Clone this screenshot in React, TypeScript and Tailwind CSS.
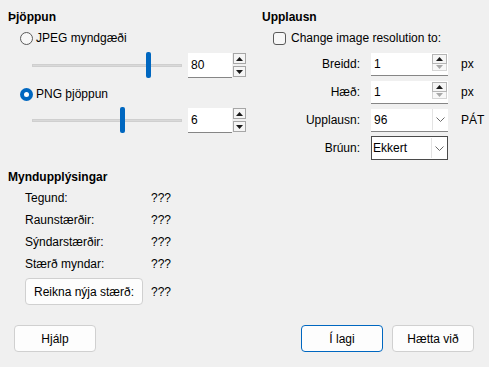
import React from 'react';

const Radio = ({ checked, label }: { checked?: boolean; label: string }) => (
    <div className="flex items-center h-[14px] pl-[12px]">
        {checked ? (
            <div className="w-[13px] h-[13px] rounded-full bg-[#0067c0] flex items-center justify-center">
                <div className="w-[5px] h-[5px] rounded-full bg-white"></div>
            </div>
        ) : (
            <div className="w-[13px] h-[13px] rounded-full border border-[#5a5a5a] bg-[#f7f7f7]"></div>
        )}
        <span className="ml-[3px]">{label}</span>
    </div>
);

const Arrow = ({ up, dim }: { up?: boolean; dim?: boolean }) => (
    <svg width="7" height="4" viewBox="0 0 7 4">
        <path d={up ? 'M0 4 L3.5 0 L7 4 Z' : 'M0 0 L3.5 4 L7 0 Z'} fill={dim ? '#a8a8a8' : '#1a1a1a'} />
    </svg>
);

const SliderRow = ({ pos, value }: { pos: number; value: string }) => (
    <div className="flex items-center h-[26px] pl-[24px]">
        <div className="relative w-[150px] h-[26px] flex items-center">
            <div className="w-full h-[3px] bg-[#d9d9d9] border border-[#cfcfcf]"></div>
            <div className="absolute top-0 w-[5px] h-[26px] bg-[#0067c0] rounded-[2px]" style={{ left: pos }}></div>
        </div>
        <div className="ml-[6px] w-[44px] h-[25px] bg-white border-b border-[#868686] flex items-center pl-[3px]">{value}</div>
        <div className="ml-[1px] flex flex-col gap-[2px]">
            <div className="w-[13px] h-[11px] border border-[#a6a6a6] bg-[#f5f5f5] flex items-center justify-center"><Arrow up /></div>
            <div className="w-[13px] h-[11px] border border-[#a6a6a6] bg-[#f5f5f5] flex items-center justify-center"><Arrow /></div>
        </div>
    </div>
);

const FormRow = ({ label, unit, children }: { label: string; unit?: string; children: React.ReactNode }) => (
    <div className="flex items-center h-[24px]">
        <span className="w-[98px] text-right">{label}</span>
        <div className="ml-[11px] w-[77px]">{children}</div>
        {unit && <span className="ml-[13px]">{unit}</span>}
    </div>
);

const SpinField = ({ value }: { value: string }) => (
    <div className="h-[23px] bg-white border-b border-[#868686] flex items-start">
        <span className="flex-1 pl-[3px] leading-[22px]">{value}</span>
        <div className="flex flex-col pt-[1px] pr-[1px]">
            <div className="w-[15px] h-[10px] border border-[#b5b5b5] bg-[#f5f5f5] flex items-center justify-center"><Arrow up /></div>
            <div className="w-[15px] h-[7px] border border-t-0 border-[#d5d5d5] bg-[#f8f8f8] flex items-center justify-center"><Arrow dim /></div>
        </div>
    </div>
);

const Chevron = () => (
    <svg width="9" height="5" viewBox="0 0 9 5">
        <path d="M0.5 0.5 L4.5 4.5 L8.5 0.5" fill="none" stroke="#6a6a6a" strokeWidth="1" />
    </svg>
);

const InfoRow = ({ label }: { label: string }) => (
    <div className="flex items-center h-[22px] pl-[17px]">
        <span className="w-[126px]">{label}</span>
        <span>???</span>
    </div>
);

const Btn = ({ label, primary }: { label: string; primary?: boolean }) => (
    <button className={`w-[82px] h-[27px] rounded-[4px] bg-[#fdfdfd] border ${primary ? 'border-[#0067c0]' : 'border-[#d0d0d0]'} text-[12px]`}>
        {label}
    </button>
);

export default function App() {
    return (
        <div className="w-[489px] h-[367px] bg-[#f0f0f0] text-[12px] text-black font-['Liberation_Sans',Arial,sans-serif] flex flex-col">
            <div className="flex pt-[9px] h-[169px]">
                {/* Þjöppun */}
                <div className="w-[262px] pl-[8px] flex flex-col">
                    <div className="h-[16px] leading-[16px] font-bold">Þjöppun</div>
                    <div className="mt-[6px]"><Radio label="JPEG myndgæði" /></div>
                    <div className="mt-[7px]"><SliderRow pos={114} value="80" /></div>
                    <div className="mt-[9px]"><Radio checked label="PNG þjöppun" /></div>
                    <div className="mt-[6px]"><SliderRow pos={88} value="6" /></div>
                </div>

                {/* Upplausn */}
                <div className="flex-1 flex flex-col">
                    <div className="h-[16px] leading-[16px] font-bold">Upplausn</div>
                    <div className="mt-[6px] flex items-center h-[14px] pl-[11px]">
                        <div className="w-[13px] h-[13px] rounded-[3px] border border-[#5a5a5a] bg-[#f7f7f7]"></div>
                        <span className="ml-[5px]">Change image resolution to:</span>
                    </div>
                    <div className="mt-[7px] flex flex-col gap-[4px]">
                        <FormRow label="Breidd:" unit="px"><SpinField value="1" /></FormRow>
                        <FormRow label="Hæð:" unit="px"><SpinField value="1" /></FormRow>
                        <FormRow label="Upplausn:" unit="PÁT">
                            <div className="h-[23px] bg-white border-b border-[#868686] flex items-center">
                                <span className="flex-1 pl-[3px]">96</span>
                                <div className="w-[16px] h-[21px] border-l border-[#e3e3e3] flex items-center justify-center"><Chevron /></div>
                            </div>
                        </FormRow>
                        <FormRow label="Brúun:">
                            <div className="h-[24px] bg-white border border-[#4a4a4a] flex items-center">
                                <span className="flex-1 pl-[1px]">Ekkert</span>
                                <div className="w-[16px] h-[20px] border-l border-[#e3e3e3] flex items-center justify-center"><Chevron /></div>
                            </div>
                        </FormRow>
                    </div>
                </div>
            </div>

            {/* Myndupplýsingar */}
            <div className="pl-[8px] flex flex-col">
                <div className="h-[16px] leading-[16px] font-bold">Myndupplýsingar</div>
                <div className="mt-[2px]">
                    <InfoRow label="Tegund:" />
                    <InfoRow label="Raunstærðir:" />
                    <InfoRow label="Sýndarstærðir:" />
                    <InfoRow label="Stærð myndar:" />
                </div>
                <div className="mt-[3px] flex items-center pl-[17px]">
                    <button className="w-[118px] h-[27px] rounded-[4px] bg-[#fdfdfd] border border-[#d0d0d0] text-[12px]">Reikna nýja stærð:</button>
                    <span className="ml-[8px]">???</span>
                </div>
            </div>

            <div className="mt-[20px] flex items-center pl-[14px] pr-[15px]">
                <Btn label="Hjálp" />
                <div className="flex-1"></div>
                <Btn label="Í lagi" primary />
                <div className="ml-[9px]"><Btn label="Hætta við" /></div>
            </div>
        </div>
    );
}
